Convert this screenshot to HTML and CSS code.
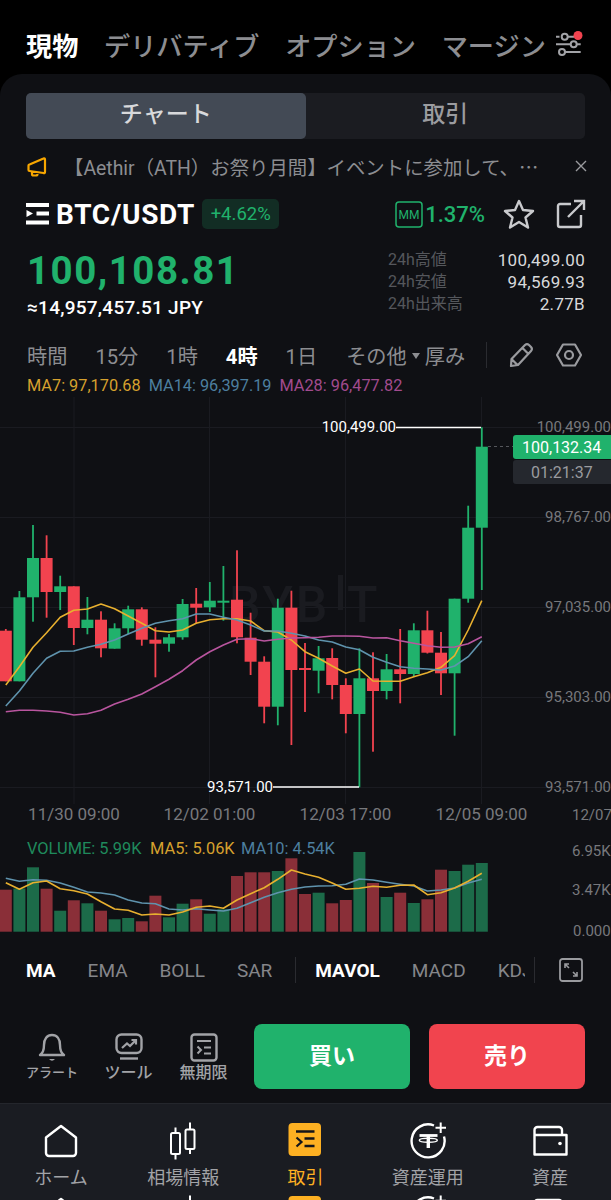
FILE: index.html
```html
<!DOCTYPE html>
<html lang="ja">
<head>
    <meta charset="UTF-8">
    <meta name="viewport" content="width=device-width, initial-scale=1.0">
    <title>BTC/USDT</title>
    <link rel="stylesheet" href="styles.css">
</head>
<body>
    <svg class="sprite">
        <symbol id="i-home" viewBox="0 0 40 38">
            <path d="M20 4 L35 15.5 V31 a3 3 0 0 1 -3 3 H8 a3 3 0 0 1 -3 -3 V15.5 Z" fill="none" stroke="#fff" stroke-width="2.4" stroke-linejoin="round"/>
        </symbol>
        <symbol id="i-market" viewBox="0 0 40 38">
            <g fill="none" stroke="#fff" stroke-width="2">
                <rect x="8" y="11" width="9" height="21" rx="1.5"/>
                <rect x="22.500" y="7.500" width="9" height="19.500" rx="1.5"/>
                <path d="M12.500 5.500 V11 M12.500 32 V37.500 M27 0.500 V7.500 M27 27 V32"/>
            </g>
        </symbol>
        <symbol id="i-trade" viewBox="0 0 40 38">
            <rect x="3.500" y="1" width="32.500" height="33" rx="4" fill="#fdb022"/>
            <path d="M11 9.500 H29.500 M19.500 16.500 H29.500 M19.500 24 H29.500" stroke="#14151a" stroke-width="2.600"/>
            <path d="M11.500 15.500 L16.500 20 L11.500 24.500" fill="none" stroke="#14151a" stroke-width="2.200"/>
        </symbol>
        <symbol id="i-earn" viewBox="0 0 40 38">
            <path d="M26 3.500 A16.500 16.500 0 1 0 36 14.500" fill="none" stroke="#fff" stroke-width="2.400"/>
            <path d="M32.700 0.500 V11 M27.500 5.700 H38" stroke="#fff" stroke-width="2"/>
            <path d="M11.500 13.500 H29.500" stroke="#fff" stroke-width="2.800"/>
            <path d="M20.300 13.500 V26" stroke="#fff" stroke-width="3.400"/>
            <ellipse cx="20.300" cy="18.300" rx="9" ry="2" fill="none" stroke="#fff" stroke-width="1.400"/>
        </symbol>
        <symbol id="i-wallet" viewBox="0 0 40 38">
            <path d="M4.500 13 V8 a3 3 0 0 1 3 -3 H29 a3 3 0 0 1 3 3 V13 M4.500 13 H36.500 V32.500 H4.500 Z" fill="none" stroke="#fff" stroke-width="2.400" stroke-linejoin="round"/>
            <circle cx="30" cy="21.500" r="1.800" fill="#fff"/>
        </symbol>
    </svg>

    <nav class="top-tabs">
        <a class="top-tab active">現物</a>
        <a class="top-tab">デリバティブ</a>
        <a class="top-tab">オプション</a>
        <a class="top-tab">マージン</a>
        <svg class="tune-icon" viewBox="0 0 34 28" width="34" height="28">
            <g fill="none" stroke="#a2a3a7" stroke-width="2">
                <path d="M6 5.700 H9.500 M17.700 5.700 H24"/>
                <circle cx="14.700" cy="5.700" r="3"/>
                <path d="M6 13.300 H20.500 M27 13.300 H30.700"/>
                <circle cx="23.700" cy="13.300" r="3"/>
                <circle cx="12" cy="21" r="3"/>
                <path d="M15 21 H30.700"/>
            </g>
            <circle cx="28" cy="4.500" r="4.500" fill="#f2434f"/>
        </svg>
    </nav>

    <main class="card">
        <div class="segment">
            <div class="segment-item active">チャート</div>
            <div class="segment-item">取引</div>
        </div>

        <div class="notice">
            <svg viewBox="0 0 22 22" width="22" height="22">
                <path d="M3.500 9.500 L17.500 3.500 a1 1 0 0 1 1.500 1 V17 a1 1 0 0 1 -1.500 1 L3.500 16 a1 1 0 0 1 -1 -1 V10.500 a1 1 0 0 1 1 -1 Z M6 16.500 V19 a1.500 1.500 0 0 0 1.500 1.500 H10 a1.500 1.500 0 0 0 1.500 -1.500 V17.500" fill="none" stroke="#f7a600" stroke-width="2.200" stroke-linejoin="round"/>
            </svg>
            <span class="notice-text">【Aethir（ATH）お祭り月間】イベントに参加して、<span class="cjk">…</span></span>
            <svg viewBox="0 0 12 12" width="12" height="12">
                <path d="M1 1 L11 11 M11 1 L1 11" stroke="#9a9b9f" stroke-width="1.400"/>
            </svg>
        </div>

        <div class="symbol-row">
            <svg class="logo" viewBox="0 0 23 22" width="23" height="22">
                <path d="M0 0 H23 V4 H0 Z M0 17.500 H23 V21.500 H0 Z M10.500 8.500 H23 V12.500 H10.500 Z M0.500 7 L7 10.500 L0.500 14 Z" fill="#fff"/>
            </svg>
            <span class="symbol">BTC/USDT</span>
            <span class="change">+4.62%</span>
            <svg class="mm-box" viewBox="0 0 28 27" width="28" height="27">
                <rect x="1" y="1" width="26" height="25" rx="3" fill="none" stroke="#20b26c" stroke-width="1.500"/>
                <text x="14" y="18" text-anchor="middle" class="mm-text">MM</text>
            </svg>
            <span class="mm-rate">1.37%</span>
            <svg class="star" viewBox="0 0 32 32" width="32" height="32">
                <path d="M16 3 L20 12 L30 13 L22.500 19.500 L25 29.500 L16 24 L7 29.500 L9.500 19.500 L2 13 L12 12 Z" fill="none" stroke="#c9cacd" stroke-width="2.400" stroke-linejoin="round"/>
            </svg>
            <svg class="share" viewBox="0 0 30 30" width="30" height="30">
                <path d="M15 5 H4 a2 2 0 0 0 -2 2 V26 a2 2 0 0 0 2 2 H23 a2 2 0 0 0 2 -2 V16 M12 18 L28 2 M18 2 H28 V11" fill="none" stroke="#c9cacd" stroke-width="2.400"/>
            </svg>
        </div>

        <div class="price-row">
            <div class="price-main">
                <div class="price">100,108.81</div>
                <div class="price-jpy">≈14,957,457.51 JPY</div>
            </div>
            <dl class="stats">
                <dt>24h高値</dt><dd>100,499.00</dd>
                <dt>24h安値</dt><dd>94,569.93</dd>
                <dt>24h出来高</dt><dd>2.77B</dd>
            </dl>
        </div>

        <div class="period-row">
            <span>時間</span>
            <span>15分</span>
            <span>1時</span>
            <span class="active">4時</span>
            <span>1日</span>
            <span class="more">その他<i class="caret"></i>厚み</span>
            <i class="vline"></i>
            <svg class="pencil" viewBox="0 0 26 26" width="26" height="26">
                <path d="M17 3 a3 3 0 0 1 4 0 L23 5 a3 3 0 0 1 0 4 L10 23 L3 24 L3.500 17 Z M14.500 6 L20.500 12 M3.500 17 L9.500 23" fill="none" stroke="#9a9b9f" stroke-width="2.200" stroke-linejoin="round"/>
            </svg>
            <svg class="hex" viewBox="0 0 26 26" width="26" height="26">
                <path d="M7 2.500 H19 L25 13 L19 23.500 H7 L1 13 Z" fill="none" stroke="#9a9b9f" stroke-width="2.200" stroke-linejoin="round"/>
                <circle cx="13" cy="13" r="4" fill="none" stroke="#9a9b9f" stroke-width="2.200"/>
            </svg>
        </div>

        <div class="ma-row">
            <span class="ma7">MA7: 97,170.68</span>
            <span class="ma14">MA14: 96,397.19</span>
            <span class="ma28">MA28: 96,477.82</span>
        </div>

        <svg id="chart" class="chart" viewBox="0 397 611 543" width="611" height="543">
            <g id="grid" stroke="#1a1b21" stroke-width="1"></g>
            <g class="watermark">
                <text x="229" y="622">BYB</text>
                <rect x="338" y="575" width="5" height="35"/>
                <text x="347" y="622">T</text>
            </g>
            <g id="candles"></g>
            <g id="vols"></g>
            <g id="lines" fill="none" stroke-width="1.600" stroke-linejoin="round"></g>

            <path d="M396 427.500 H481" stroke="#fff" stroke-width="1.600"/>
            <path d="M273 787 H359" stroke="#fff" stroke-width="1.600"/>
            <path d="M488 446.500 H513" stroke="#55575c" stroke-dasharray="3 3"/>
            <text class="mark" x="396" y="432" text-anchor="end">100,499.00</text>
            <text class="mark" x="273" y="792" text-anchor="end">93,571.00</text>

            <text class="axis" x="611" y="432" text-anchor="end">100,499.00</text>
            <text class="axis" x="611" y="522" text-anchor="end">98,767.00</text>
            <text class="axis" x="611" y="612" text-anchor="end">97,035.00</text>
            <text class="axis" x="611" y="702" text-anchor="end">95,303.00</text>
            <text class="axis" x="611" y="792" text-anchor="end">93,571.00</text>

            <path d="M516 435 H611 V459 H516 a3 3 0 0 1 -3 -3 V438 a3 3 0 0 1 3 -3 Z" fill="#20b26c"/>
            <text class="tag" x="522" y="452.500">100,132.34</text>
            <path d="M516 460 H611 V484 H516 a3 3 0 0 1 -3 -3 V463 a3 3 0 0 1 3 -3 Z" fill="#25282e"/>
            <text class="countdown" x="531" y="478">01:21:37</text>

            <text class="axis time" x="74" y="820" text-anchor="middle">11/30 09:00</text>
            <text class="axis time" x="209.500" y="820" text-anchor="middle">12/02 01:00</text>
            <text class="axis time" x="345.500" y="820" text-anchor="middle">12/03 17:00</text>
            <text class="axis time" x="481.500" y="820" text-anchor="middle">12/05 09:00</text>
            <text class="axis" x="572" y="820">12/07</text>

            <text class="legend vol-green" x="27" y="854">VOLUME: 5.99K</text>
            <text class="legend ma7" x="150" y="854">MA5: 5.06K</text>
            <text class="legend ma14" x="241" y="854">MA10: 4.54K</text>

            <text class="axis" x="572" y="856">6.95K</text>
            <text class="axis" x="572" y="895">3.47K</text>
            <text class="axis" x="573" y="936">0.000</text>
        </svg>

        <div class="indicator-row">
            <div class="indicator-scroll">
                <span class="active">MA</span>
                <span>EMA</span>
                <span>BOLL</span>
                <span>SAR</span>
                <i class="vline"></i>
                <span class="active">MAVOL</span>
                <span>MACD</span>
                <span>KDJ</span>
            </div>
            <i class="vline"></i>
            <svg class="expand" viewBox="0 0 24 24" width="24" height="24">
                <rect x="1" y="1" width="22" height="22" rx="2.500" fill="none" stroke="#9a9b9f" stroke-width="1.800"/>
                <path d="M6 10 V6 H10 M6 6 L10 10 M18 14 V18 H14 M18 18 L14 14" fill="none" stroke="#9a9b9f" stroke-width="1.600"/>
            </svg>
        </div>

        <div class="action-row">
            <div class="tools">
                <div class="tool small">
                    <svg viewBox="0 0 28 30" width="28" height="30">
                        <path d="M2 22 C5 20 6 17 6 12 C6 6 9 2 14 2 C19 2 22 6 22 12 C22 17 23 20 26 22 Z" fill="none" stroke="#a2a3a7" stroke-width="2.400" stroke-linejoin="round"/>
                        <path d="M11 26 Q14 29.500 17 26 Z" fill="#a2a3a7"/>
                    </svg>
                    アラート
                </div>
                <div class="tool">
                    <svg viewBox="0 0 28 30" width="28" height="30">
                        <rect x="1.500" y="1.500" width="25" height="18.500" rx="5" fill="none" stroke="#a2a3a7" stroke-width="2.400"/>
                        <path d="M7 15 L12 10.500 L15 13 L20.500 7.500 M16.500 7 H21 V11.500" fill="none" stroke="#a2a3a7" stroke-width="2.200"/>
                        <path d="M5 25.500 H23" stroke="#a2a3a7" stroke-width="2.400"/>
                    </svg>
                    ツール
                </div>
                <div class="tool">
                    <svg viewBox="0 0 28 30" width="28" height="30">
                        <rect x="1.500" y="1.500" width="25" height="26" rx="3" fill="none" stroke="#a2a3a7" stroke-width="2.400"/>
                        <path d="M7 8 H21 M14 14.500 H21 M14 20.500 H21" stroke="#a2a3a7" stroke-width="2.200"/>
                        <path d="M7.500 13.500 L11 17 L7.500 20.500" fill="none" stroke="#a2a3a7" stroke-width="2"/>
                    </svg>
                    無期限
                </div>
            </div>
            <button class="trade-btn buy">買い</button>
            <button class="trade-btn sell">売り</button>
        </div>
    </main>

    <nav class="bottom-nav">
        <a class="nav-item"><svg width="40" height="38"><use href="#i-home"/></svg>ホーム</a>
        <a class="nav-item"><svg width="40" height="38"><use href="#i-market"/></svg>相場情報</a>
        <a class="nav-item active"><svg width="40" height="38"><use href="#i-trade"/></svg>取引</a>
        <a class="nav-item"><svg width="40" height="38"><use href="#i-earn"/></svg>資産運用</a>
        <a class="nav-item"><svg width="40" height="38"><use href="#i-wallet"/></svg>資産</a>
        <!-- second copy of the icons, cut off by the bottom of the screenshot -->
        <a class="nav-item"><svg width="40" height="38"><use href="#i-home"/></svg></a>
        <a class="nav-item"><svg width="40" height="38"><use href="#i-market"/></svg></a>
        <a class="nav-item"><svg width="40" height="38"><use href="#i-trade"/></svg></a>
        <a class="nav-item"><svg width="40" height="38"><use href="#i-earn"/></svg></a>
        <a class="nav-item"><svg width="40" height="38"><use href="#i-wallet"/></svg></a>
    </nav>

    <script src="chart.js"></script>
</body>
</html>
```

FILE: styles.css
```css
* {
    box-sizing: border-box;
}

html, body {
    height: 1200px;
    overflow: hidden;
}

body {
    margin: 0;
    background-color: #000;
    color: #fff;
    font-family: Roboto, "Noto Sans CJK JP", sans-serif;
}

.sprite {
    display: none;
}

svg {
    display: block;
    flex-shrink: 0;
}

.top-tabs {
    display: flex;
    align-items: center;
    gap: 25.600px;
    height: 74px;
    padding: 16px 0 0 26px;
}

.top-tab {
    font-size: 26.200px;
    font-weight: 500;
    color: #8c8d91;
    white-space: nowrap;
}

.top-tab.active {
    color: #fff;
    font-weight: 700;
}

.tune-icon {
    margin-left: -21.600px;
}

.card {
    height: 1029px;
    padding-top: 19px;
    background-color: #0f1014;
    border-radius: 22px 22px 0 0;
}

.segment {
    display: flex;
    height: 46px;
    margin: 0 26px;
    background-color: #1b1c21;
    border-radius: 5px;
}

.segment-item {
    flex: 1;
    text-align: center;
    line-height: 44px;
    font-size: 23px;
    font-weight: 500;
    color: #9b9ca0;
    border-radius: 5px;
}

.segment-item.active {
    background-color: #434a55;
    color: #d8d9db;
}

.notice {
    display: flex;
    align-items: center;
    height: 54px;
    padding: 0 24px 0 26px;
}

.notice-text {
    flex: 1;
    margin-left: 16px;
    font-size: 19.400px;
    color: #8c8d91;
    white-space: nowrap;
    overflow: hidden;
}

.cjk {
    font-family: "Noto Sans CJK JP", sans-serif;
}

.symbol-row {
    display: flex;
    align-items: center;
    height: 42px;
    padding: 0 25px 0 26px;
}

.symbol {
    margin-left: 7px;
    font-size: 28px;
    font-weight: 700;
    letter-spacing: 0.700px;
}

.change {
    margin-left: 7px;
    padding: 0 8.500px;
    height: 30px;
    line-height: 30px;
    font-size: 18.500px;
    color: #20b26c;
    background-color: #122d24;
    border-radius: 5px;
}

.mm-box {
    margin-left: auto;
}

.mm-text {
    font-size: 12px;
    fill: #20b26c;
}

.mm-rate {
    margin-left: 2px;
    font-size: 22px;
    font-weight: 500;
    color: #20b26c;
}

.star {
    margin-left: 18px;
}

.share {
    margin-left: 21px;
}

.price-row {
    display: flex;
    justify-content: space-between;
    height: 90px;
    padding: 14px 26px 0 27px;
}

.price {
    font-size: 38.500px;
    font-weight: 700;
    line-height: 44px;
    letter-spacing: 1.500px;
    color: #20b26c;
}

.price-jpy {
    font-size: 19px;
    font-weight: 500;
    line-height: 30px;
    letter-spacing: 0.250px;
}

.stats {
    display: grid;
    grid-template-columns: 100px 97px;
    grid-auto-rows: 22px;
    margin: 0;
    font-size: 16px;
    line-height: 22px;
}

.stats dt {
    color: #55575c;
}

.stats dd {
    margin: 0;
    text-align: right;
    font-size: 17px;
    letter-spacing: 0.300px;
    color: #d8d9db;
}

.period-row {
    display: flex;
    align-items: center;
    gap: 28px;
    height: 40px;
    margin-top: 10px;
    padding-left: 27px;
    font-size: 20.200px;
    color: #8c8d91;
}

.period-row .active {
    color: #fff;
    font-weight: 700;
}

.period-row .more {
    display: flex;
    align-items: center;
    margin-left: 1px;
}

.caret {
    width: 0;
    height: 0;
    margin: 2px 5px 0;
    border: 4px solid transparent;
    border-top: 6px solid #8c8d91;
    border-bottom: 0;
}

.vline {
    width: 1px;
    height: 26px;
    background-color: #2a2b30;
    flex-shrink: 0;
}

.period-row .vline {
    margin-left: -7px;
}

.period-row .pencil {
    margin-left: -7px;
}

.period-row .hex {
    margin-left: -6px;
}

.ma-row {
    display: flex;
    gap: 8px;
    height: 22px;
    padding-left: 27px;
    font-size: 16.300px;
    line-height: 22px;
}

.ma7 { color: #d6a12e; fill: #d6a12e; }
.ma14 { color: #4d7f9f; fill: #4d7f9f; }
.ma28 { color: #a24b8e; fill: #a24b8e; }
.vol-green { fill: #1f8a5c; }

.chart text {
    font-family: Roboto, sans-serif;
}

.axis {
    font-size: 15px;
    fill: #77787c;
}

.axis.time {
    font-size: 17px;
}

.mark {
    font-size: 15px;
    fill: #fff;
}

.tag {
    font-size: 16px;
    fill: #fff;
}

.countdown {
    font-size: 16px;
    fill: #9a9b9f;
}

.legend {
    font-size: 16.400px;
}

.watermark {
    fill: #1a1b20;
}

.watermark text {
    font-size: 50px;
    font-weight: 500;
    letter-spacing: 3px;
}

.indicator-row {
    display: flex;
    align-items: center;
    height: 60px;
    padding-left: 26px;
}

.indicator-scroll {
    display: flex;
    align-items: center;
    gap: 32px;
    width: 499px;
    overflow: hidden;
    font-size: 19px;
    color: #85868a;
}

.indicator-scroll .active {
    color: #fff;
    font-weight: 700;
}

.indicator-scroll .vline {
    margin: 0 -13px 0 -9px;
}

.indicator-row > .vline {
    margin-left: 9px;
}

.expand {
    margin-left: 24px;
}

.action-row {
    display: flex;
    gap: 19px;
    height: 65px;
    margin-top: 24px;
    padding: 0 26px;
}

.tools {
    display: flex;
    gap: 26px;
    margin-right: 7px;
    padding-top: 9px;
}

.tool {
    display: flex;
    flex-direction: column;
    align-items: center;
    width: 49px;
    font-size: 16px;
    font-weight: 500;
    line-height: 20px;
    color: #a2a3a7;
    white-space: nowrap;
}

.tool.small {
    width: 52px;
    font-size: 13px;
}

.trade-btn {
    width: 156px;
    padding: 0 0 5px;
    border: none;
    border-radius: 8px;
    font-family: inherit;
    font-size: 23px;
    font-weight: 700;
    color: #fff;
}

.buy {
    background-color: #20b26c;
}

.sell {
    background-color: #f1444e;
}

.bottom-nav {
    display: grid;
    grid-template-columns: repeat(5, 1fr);
    row-gap: 4px;
    height: 97px;
    padding-top: 18px;
    background-color: #1a1c22;
    border-top: 1px solid #24262c;
    overflow: hidden;
}

.nav-item {
    display: flex;
    flex-direction: column;
    align-items: center;
    font-size: 18px;
    line-height: 26px;
    color: #a2a3a7;
    white-space: nowrap;
}

.nav-item svg {
    margin-bottom: 5px;
}

.nav-item.active {
    color: #fdb022;
}
```

FILE: chart.js
```js
const GREEN = '#20b26c';
const RED = '#f2434f';
const NS = 'http://www.w3.org/2000/svg';

// [up, wick top, body top, body bottom, wick bottom] in page pixels
const CANDLES = [
    [0, 629, 630.7, 681.3, 681.3],
    [1, 591, 597.3, 681.3, 681.3],
    [1, 525, 558, 597.3, 621.7],
    [0, 535.3, 558, 592, 617.7],
    [1, 575.7, 586.3, 592, 610],
    [0, 586.3, 586.3, 628, 645],
    [1, 597, 619.7, 628, 634.3],
    [0, 611.3, 619.7, 648.3, 657.3],
    [1, 623.3, 628.3, 648.7, 648.7],
    [1, 605.7, 609.3, 628.3, 634],
    [0, 607.3, 609.3, 639.7, 645.7],
    [0, 627.3, 639.7, 643.7, 677.3],
    [1, 634, 637.3, 643.7, 651.7],
    [1, 599, 604, 637.3, 639.7],
    [0, 588, 603.7, 607.7, 623.3],
    [1, 582, 600.7, 607.3, 612],
    [1, 566, 600.7, 602.7, 620.7],
    [0, 550.3, 599.7, 637.3, 643.3],
    [0, 612.7, 637.7, 661.7, 675],
    [0, 656.3, 661.7, 706.7, 723.3],
    [1, 598.7, 607.7, 706.7, 725.3],
    [0, 590.7, 607.7, 670, 745],
    [0, 643, 668, 670, 712],
    [1, 646, 658.3, 670.7, 693.3],
    [0, 648.3, 658, 685, 699.3],
    [0, 678.3, 685, 714, 733.3],
    [1, 648.3, 678.3, 714, 787.3],
    [0, 652.3, 678.3, 691, 751.7],
    [1, 654, 669.3, 691, 699.3],
    [0, 629, 669.3, 674, 703.3],
    [1, 623.3, 630.3, 674, 677],
    [0, 610.7, 630.3, 652.7, 653.5],
    [0, 632, 652.7, 673.3, 695],
    [1, 598.7, 598.7, 673.3, 735.7],
    [1, 505.7, 527.7, 598.7, 602.7],
    [1, 427.3, 446.7, 527.7, 590]
];

const VOL_TOPS = [
    889.7, 888.5, 867.3, 888.7, 910.7, 900.3, 903.3, 910.7, 919.3, 918, 921.3, 895.7,
    917.3, 903.7, 899.3, 913.7, 909.3, 876, 872.3, 872.3, 871, 858.3, 894, 892.7,
    903.3, 900, 852, 883, 897, 892.7, 903, 899.3, 869.7, 871, 864.7, 863
];

const LINES = {
    '#e8b02f': [685, 666.7, 647.3, 632.7, 617.3, 610.3, 609, 604, 608.7, 616, 623.3, 630.7, 632, 630, 623.3, 619.7, 618.7, 618.7, 621, 630.7, 632, 640, 651.7, 658.3, 666, 673.3, 669, 681, 681.3, 681.3, 676.7, 672.7, 667.3, 655.7, 630, 600.7],
    '#5f93ad': [706, 691, 673.3, 658.3, 651.3, 651, 647.3, 644.3, 640, 634, 628.3, 623.3, 620.7, 618.7, 614, 614, 617.3, 620, 625, 631, 631, 633.3, 636, 640, 642, 647, 649.7, 657.3, 662.3, 666.7, 668.3, 669, 670, 666, 656.7, 640.7],
    '#b9559f': [711.7, 710.3, 710.3, 711, 712.3, 715, 713.7, 710.3, 704, 699.3, 694, 686.7, 679.3, 670.7, 660, 651.7, 645, 639.3, 638.7, 641, 639.3, 638, 637.7, 637.3, 636, 636, 636.3, 638, 637.7, 640.7, 643.3, 645.7, 647.3, 647, 643.7, 636.7]
};

const VOL_LINES = {
    '#5f93ad': [878.3, 881.3, 879.7, 880.3, 883, 887.3, 892, 893, 895, 900, 903, 903.7, 909, 910, 908.7, 910, 911, 908.3, 902.7, 897.3, 892.7, 889.3, 887, 886, 885.7, 884.3, 879, 880, 882.3, 884.3, 886, 891, 890, 888, 883, 879.3],
    '#e8b02f': [882.7, 889.3, 882.7, 881, 888.7, 890.7, 894, 901.7, 909, 910.3, 915, 914, 915, 912, 907.3, 906, 908.3, 900, 893.7, 887.7, 879.3, 870, 874, 877.3, 883, 889.3, 888.3, 886.3, 887.3, 885.3, 885, 894.7, 892.7, 888, 881.3, 873.3]
};

const centerX = (i) => 5.8 + i * 13.6;

function add(parent, tag, attrs) {
    const el = document.createElementNS(NS, tag);
    Object.keys(attrs).forEach((key) => el.setAttribute(key, attrs[key]));
    parent.appendChild(el);
    return el;
}

function drawGrid() {
    const grid = document.getElementById('grid');
    [427.5, 517.5, 607.5, 697.5, 787.5].forEach((y) => {
        add(grid, 'line', { x1: 0, x2: 611, y1: y, y2: y });
    });
    [74, 209.5, 345.5, 481.5].forEach((x) => {
        add(grid, 'line', { x1: x, x2: x, y1: 397, y2: 804 });
    });
}

function drawCandles() {
    const group = document.getElementById('candles');
    CANDLES.forEach(([up, top, bodyTop, bodyBottom, bottom], i) => {
        const fill = up ? GREEN : RED;
        const x = centerX(i);
        add(group, 'rect', { x: x - 0.9, y: top, width: 1.8, height: bottom - top, fill });
        add(group, 'rect', { x: x - 6, y: bodyTop, width: 12, height: Math.max(bodyBottom - bodyTop, 2), fill });
    });
}

function drawVolumes() {
    const group = document.getElementById('vols');
    VOL_TOPS.forEach((top, i) => {
        add(group, 'rect', {
            x: centerX(i) - 6,
            y: top,
            width: 12,
            height: 931.7 - top,
            fill: CANDLES[i][0] ? '#1c6b49' : '#8a2f38'
        });
    });
}

function drawLines(lines) {
    const group = document.getElementById('lines');
    Object.keys(lines).forEach((stroke) => {
        const points = lines[stroke].map((y, i) => centerX(i) + ',' + y).join(' ');
        add(group, 'polyline', { points, stroke });
    });
}

drawGrid();
drawCandles();
drawVolumes();
drawLines(LINES);
drawLines(VOL_LINES);
```
